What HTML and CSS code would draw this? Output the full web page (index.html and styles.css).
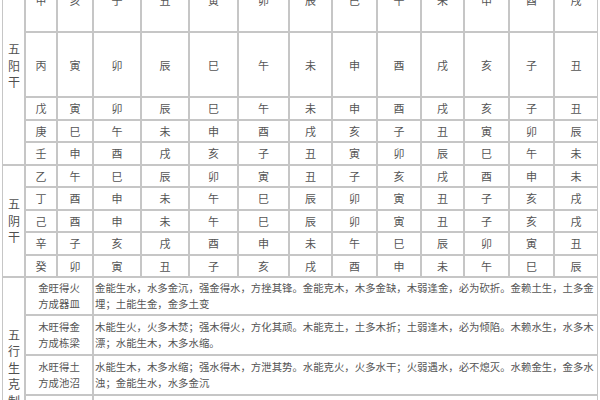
FILE: index.html
```html
<!DOCTYPE html>
<html lang="zh">
<head>
<meta charset="utf-8">
<title>十二长生表</title>
<link rel="stylesheet" href="styles.css">
</head>
<body>
<table class="grid">
  <colgroup>
    <col class="c1"><col class="c2"><col class="c3"><col class="c4"><col class="c5"><col class="c6"><col class="c7">
    <col class="c8"><col class="c9"><col class="c10"><col class="c11"><col class="c12"><col class="c13"><col class="c14">
  </colgroup>
  <tbody>
    <tr class="tall"><td class="label" rowspan="5">五阳干</td><td>甲</td><td>亥</td><td>子</td><td>丑</td><td>寅</td><td>卯</td><td>辰</td><td>巳</td><td>午</td><td>未</td><td>申</td><td>酉</td><td>戌</td></tr>
    <tr class="tall"><td>丙</td><td>寅</td><td>卯</td><td>辰</td><td>巳</td><td>午</td><td>未</td><td>申</td><td>酉</td><td>戌</td><td>亥</td><td>子</td><td>丑</td></tr>
    <tr class="short"><td>戊</td><td>寅</td><td>卯</td><td>辰</td><td>巳</td><td>午</td><td>未</td><td>申</td><td>酉</td><td>戌</td><td>亥</td><td>子</td><td>丑</td></tr>
    <tr class="short"><td>庚</td><td>巳</td><td>午</td><td>未</td><td>申</td><td>酉</td><td>戌</td><td>亥</td><td>子</td><td>丑</td><td>寅</td><td>卯</td><td>辰</td></tr>
    <tr class="short"><td>壬</td><td>申</td><td>酉</td><td>戌</td><td>亥</td><td>子</td><td>丑</td><td>寅</td><td>卯</td><td>辰</td><td>巳</td><td>午</td><td>未</td></tr>
    <tr class="short"><td class="label" rowspan="5">五阴干</td><td>乙</td><td>午</td><td>巳</td><td>辰</td><td>卯</td><td>寅</td><td>丑</td><td>子</td><td>亥</td><td>戌</td><td>酉</td><td>申</td><td>未</td></tr>
    <tr class="short"><td>丁</td><td>酉</td><td>申</td><td>未</td><td>午</td><td>巳</td><td>辰</td><td>卯</td><td>寅</td><td>丑</td><td>子</td><td>亥</td><td>戌</td></tr>
    <tr class="short"><td>己</td><td>酉</td><td>申</td><td>未</td><td>午</td><td>巳</td><td>辰</td><td>卯</td><td>寅</td><td>丑</td><td>子</td><td>亥</td><td>戌</td></tr>
    <tr class="short"><td>辛</td><td>子</td><td>亥</td><td>戌</td><td>酉</td><td>申</td><td>未</td><td>午</td><td>巳</td><td>辰</td><td>卯</td><td>寅</td><td>丑</td></tr>
    <tr class="short"><td>癸</td><td>卯</td><td>寅</td><td>丑</td><td>子</td><td>亥</td><td>戌</td><td>酉</td><td>申</td><td>未</td><td>午</td><td>巳</td><td>辰</td></tr>
    <tr class="wx first"><td class="label" rowspan="5">五行生克制化</td><td class="wang" colspan="2">金旺得火<br>方成器皿</td><td class="desc" colspan="11">金能生水，水多金沉，强金得水，方挫其锋。金能克木，木多金缺，木弱逢金，必为砍折。金赖土生，土多金埋；土能生金，金多土变</td></tr>
    <tr class="wx"><td class="wang" colspan="2">木旺得金<br>方成栋梁</td><td class="desc" colspan="11">木能生火，火多木焚；强木得火，方化其顽。木能克土，土多木折；土弱逢木，必为倾陷。木赖水生，水多木漂；水能生木，木多水缩。</td></tr>
    <tr class="wx"><td class="wang" colspan="2">水旺得土<br>方成池沼</td><td class="desc" colspan="11">水能生木，木多水缩；强水得木，方泄其势。水能克火，火多水干；火弱遇水，必不熄灭。水赖金生，金多水浊；金能生水，水多金沉</td></tr>
    <tr class="wx"><td class="wang" colspan="2">火旺得水<br>方成相济</td><td class="desc" colspan="11">火能生土，土多火晦；强火得土，方止其焰。火能克金，金多火熄；金弱遇火，必见销熔。火赖木生，木多火炽；木能生火，火多木焚</td></tr>
    <tr class="wx"><td class="wang" colspan="2">土旺得木<br>方能疏通</td><td class="desc" colspan="11">土能生金，金多土变；强土得金，方制其壅。土能克水，水多土流；水弱逢土，必为淤塞。土赖火生，火多土焦；火能生土，土多火晦</td></tr>
  </tbody>
</table>
</body>
</html>
```
FILE: styles.css
```css
html, body {
  margin: 0;
  padding: 0;
  background: #ffffff;
}

body {
  font-family: "Noto Sans CJK SC", "Noto Sans", sans-serif;
  color: #555555;
  overflow: hidden;
}

.grid {
  margin: -33px 0 0 2px;
  width: 596px;
  table-layout: fixed;
  border-collapse: separate;
  border-spacing: 0;
  font-size: 11px;
}

.c1 { width: 23px; }
.c2 { width: 32px; }
.c3 { width: 36px; }
.c4 { width: 48px; }
.c5 { width: 48px; }
.c6 { width: 49px; }
.c7 { width: 51px; }
.c8 { width: 43px; }
.c9 { width: 45px; }
.c10 { width: 44px; }
.c11 { width: 43px; }
.c12 { width: 45px; }
.c13 { width: 45px; }
.c14 { width: 44px; }

.grid td {
  border: 1px solid #c6c6c6;
  padding: 0;
  text-align: center;
  vertical-align: middle;
  line-height: 14px;
}

.tall { height: 65px; }
.short { height: 22.5px; }
.wx { height: 40px; }
.wx.first { height: 38px; }

.grid td.label {
  font-size: 12px;
  line-height: 16.5px;
  padding: 0 5px;
  color: #505050;
}

.grid td.wang {
  font-size: 10.4px;
  line-height: 16.5px;
}

.grid td.desc {
  font-size: 10.4px;
  line-height: 16.5px;
  text-align: left;
  padding-left: 1px;
}
```
